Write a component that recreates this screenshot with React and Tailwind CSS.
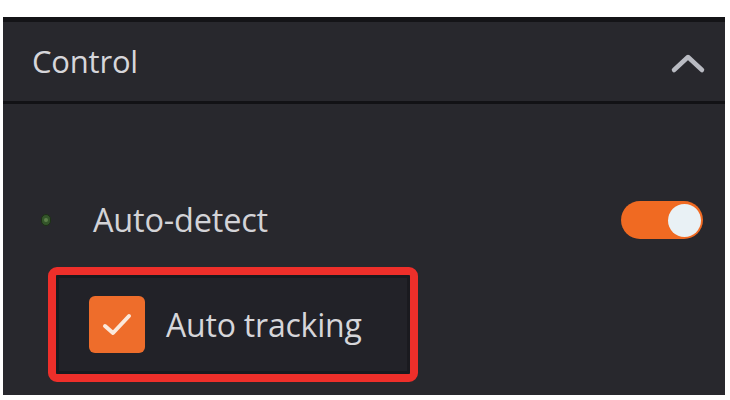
export default function App() {
  return (
    <div className="w-[730px] h-[400px] bg-white pt-[17px] pl-[3px] pr-[5px] pb-[5px]" style={{ fontFamily: '"Open Sans", "Noto Sans", sans-serif' }}>
      <div className="w-full h-full bg-[#28282d] border-t-[5px] border-[#141417] flex flex-col">
        <div className="h-[82px] flex items-center justify-between pl-[29px] pr-[19px] border-b-[3px] border-[#121215]">
          <span className="text-[31px] leading-none text-[#d6d6da] tracking-[-0.2px]">Control</span>
          <svg width="36" height="24" viewBox="0 0 36 24" fill="none">
            <path d="M4 20 L18 7 L32 20" stroke="#b9bbc2" strokeWidth="4.5" strokeLinecap="round" strokeLinejoin="round" />
          </svg>
        </div>
        <div className="flex flex-col pt-[96px]">
          <div className="flex items-center h-[40px] pl-[38px] pr-[22px]">
            <div className="w-[10px] h-[12px] rounded-full bg-[#34552a] border border-[#1d3016] flex items-center justify-center">
              <div className="w-[4px] h-[4px] rounded-full bg-[#5c7f4a]" />
            </div>
            <span className="ml-[42px] text-[32.5px] leading-none text-[#d3d3d7] tracking-[-0.2px]">Auto-detect</span>
            <div className="ml-auto w-[82px] h-[38px] rounded-full bg-[#f06a22] flex items-center justify-end pr-[2px]">
              <div className="w-[33px] h-[33px] rounded-full bg-[#e9f1f5]" />
            </div>
          </div>
          <div className="mt-[27px] ml-[45px] w-[370px] h-[115px] border-[8px] border-[#ee2f2a] rounded-[9px] bg-[#222228] flex items-center">
            <div className="w-[358px] h-[99px] border-[3px] border-[#1a1a1f] rounded-[2px] flex items-center pl-[30px]">
              <div className="w-[56px] h-[57px] rounded-[6px] bg-[#ee6d2b] flex items-center justify-center">
                <svg width="32" height="26" viewBox="0 0 32 26" fill="none">
                  <path d="M4 14 L12 21 L28 4" stroke="#fbe9dc" strokeWidth="4" strokeLinecap="round" strokeLinejoin="round" />
                </svg>
              </div>
              <span className="ml-[21px] text-[32px] leading-none text-[#d6d6da] tracking-[-0.2px]">Auto tracking</span>
            </div>
          </div>
        </div>
      </div>
    </div>
  );
}
